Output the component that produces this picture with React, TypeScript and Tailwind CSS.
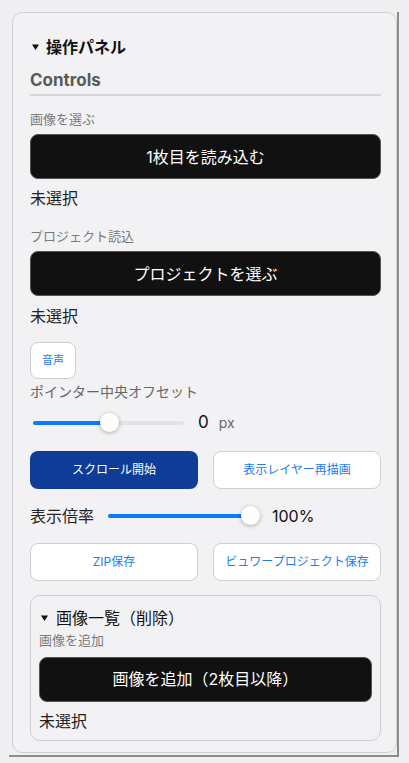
import React, { useState } from 'react'

const font = { fontFamily: 'Inter, "Noto Sans CJK JP", sans-serif' }

const Caret: React.FC = () => (
  <svg width="7" height="6" viewBox="0 0 7 6" className="shrink-0">
    <path d="M0 0.5h7L3.5 6z" fill="#111" />
  </svg>
)

const Slider: React.FC<{ value: number; className: string }> = ({ value, className }) => (
  <div className={`relative h-[20px] flex items-center ${className}`}>
    <div className="w-full h-[4px] rounded-full bg-[#e3e3e6]">
      <div className="h-full rounded-full bg-[#0a7aff]" style={{ width: `${value}%` }} />
    </div>
    <div
      className="absolute w-[19px] h-[19px] rounded-full bg-white shadow-[0_1px_4px_rgba(0,0,0,0.3)]"
      style={{ left: `calc(${value}% - 9px)` }}
    />
  </div>
)

const BlackButton: React.FC<{ label: string }> = ({ label }) => (
  <button className="w-full h-[45px] rounded-[8px] bg-[#111111] text-white text-[16px] border border-[#555]">
    {label}
  </button>
)

const App: React.FC = () => {
  const [offset] = useState(0)
  const [zoom] = useState(100)

  return (
    <div className="w-[409px] h-[763px] bg-[#efeff1] pt-[12px] pl-[9px]" style={font}>
      <div className="w-[390px] h-[745px] border-r-2 border-b-2 border-[#8c8c8c] pl-[3px]">
        <div className="h-[741px] rounded-[10px] border border-[#cfcfd2] bg-[#f2f2f4] pl-[17px] pr-[15px] pt-[22px]">
          {/* Header */}
          <div className="flex items-center gap-[7px] h-[24px] pl-[2px]">
            <Caret />
            <h1 className="text-[16px] font-bold text-[#111]">操作パネル</h1>
          </div>
          <div className="mt-[9px] border-b-2 border-[#d6d6d9] pb-[2px]">
            <h2 className="text-[17px] font-bold text-[#5a5a5a] leading-[24px]">Controls</h2>
          </div>

          {/* First image */}
          <p className="mt-[14px] text-[13px] text-[#7a7a7a] leading-[18px]">画像を選ぶ</p>
          <div className="mt-[6px]">
            <BlackButton label="1枚目を読み込む" />
          </div>
          <p className="mt-[8px] text-[16px] text-[#222] leading-[22px]">未選択</p>

          {/* Project */}
          <p className="mt-[18px] text-[13px] text-[#7a7a7a] leading-[18px]">プロジェクト読込</p>
          <div className="mt-[6px]">
            <BlackButton label="プロジェクトを選ぶ" />
          </div>
          <p className="mt-[9px] text-[16px] text-[#222] leading-[22px]">未選択</p>

          <button className="mt-[15px] w-[46px] h-[37px] rounded-[8px] bg-white border border-[#cfcfd2] text-[11px] text-[#1a7cf5]">
            音声
          </button>

          <p className="mt-[3px] text-[14px] text-[#666] leading-[20px]">ポインター中央オフセット</p>
          <div className="mt-[8px] flex items-center">
            <Slider value={50} className="w-[151px] ml-[3px]" />
            <span className="ml-[14px] text-[17px] text-[#111]">{offset}</span>
            <span className="ml-[10px] text-[14px] text-[#666]">px</span>
          </div>

          <div className="mt-[15px] grid grid-cols-2 gap-[15px]">
            <button className="h-[38px] rounded-[8px] bg-[#0e3c97] text-white text-[12px]">スクロール開始</button>
            <button className="h-[38px] rounded-[8px] bg-white border border-[#cfcfd2] text-[12px] text-[#1a7cf5]">
              表示レイヤー再描画
            </button>
          </div>

          <div className="mt-[16px] flex items-center h-[22px]">
            <span className="text-[16px] text-[#222] w-[78px]">表示倍率</span>
            <Slider value={zoom} className="w-[142px]" />
            <span className="ml-[22px] text-[16px] text-[#111]">{zoom}%</span>
          </div>

          <div className="mt-[16px] grid grid-cols-2 gap-[15px]">
            <button className="h-[38px] rounded-[8px] bg-white border border-[#cfcfd2] text-[12px] text-[#1a7cf5]">
              ZIP保存
            </button>
            <button className="h-[38px] rounded-[8px] bg-white border border-[#cfcfd2] text-[12px] text-[#1a7cf5]">
              ビュワープロジェクト保存
            </button>
          </div>

          {/* Image list */}
          <div className="mt-[14px] rounded-[10px] border border-[#cfcfd2] px-[8px] pt-[10px] pb-[8px]">
            <div className="flex items-center gap-[8px] pl-[2px] h-[24px]">
              <Caret />
              <span className="text-[16px] text-[#111]">画像一覧（削除）</span>
            </div>
            <p className="mt-[1px] text-[13px] text-[#7a7a7a] leading-[18px]">画像を追加</p>
            <div className="mt-[8px]">
              <BlackButton label="画像を追加（2枚目以降）" />
            </div>
            <p className="mt-[8px] text-[16px] text-[#222] leading-[22px]">未選択</p>
          </div>
        </div>
      </div>
    </div>
  )
}

export default App
